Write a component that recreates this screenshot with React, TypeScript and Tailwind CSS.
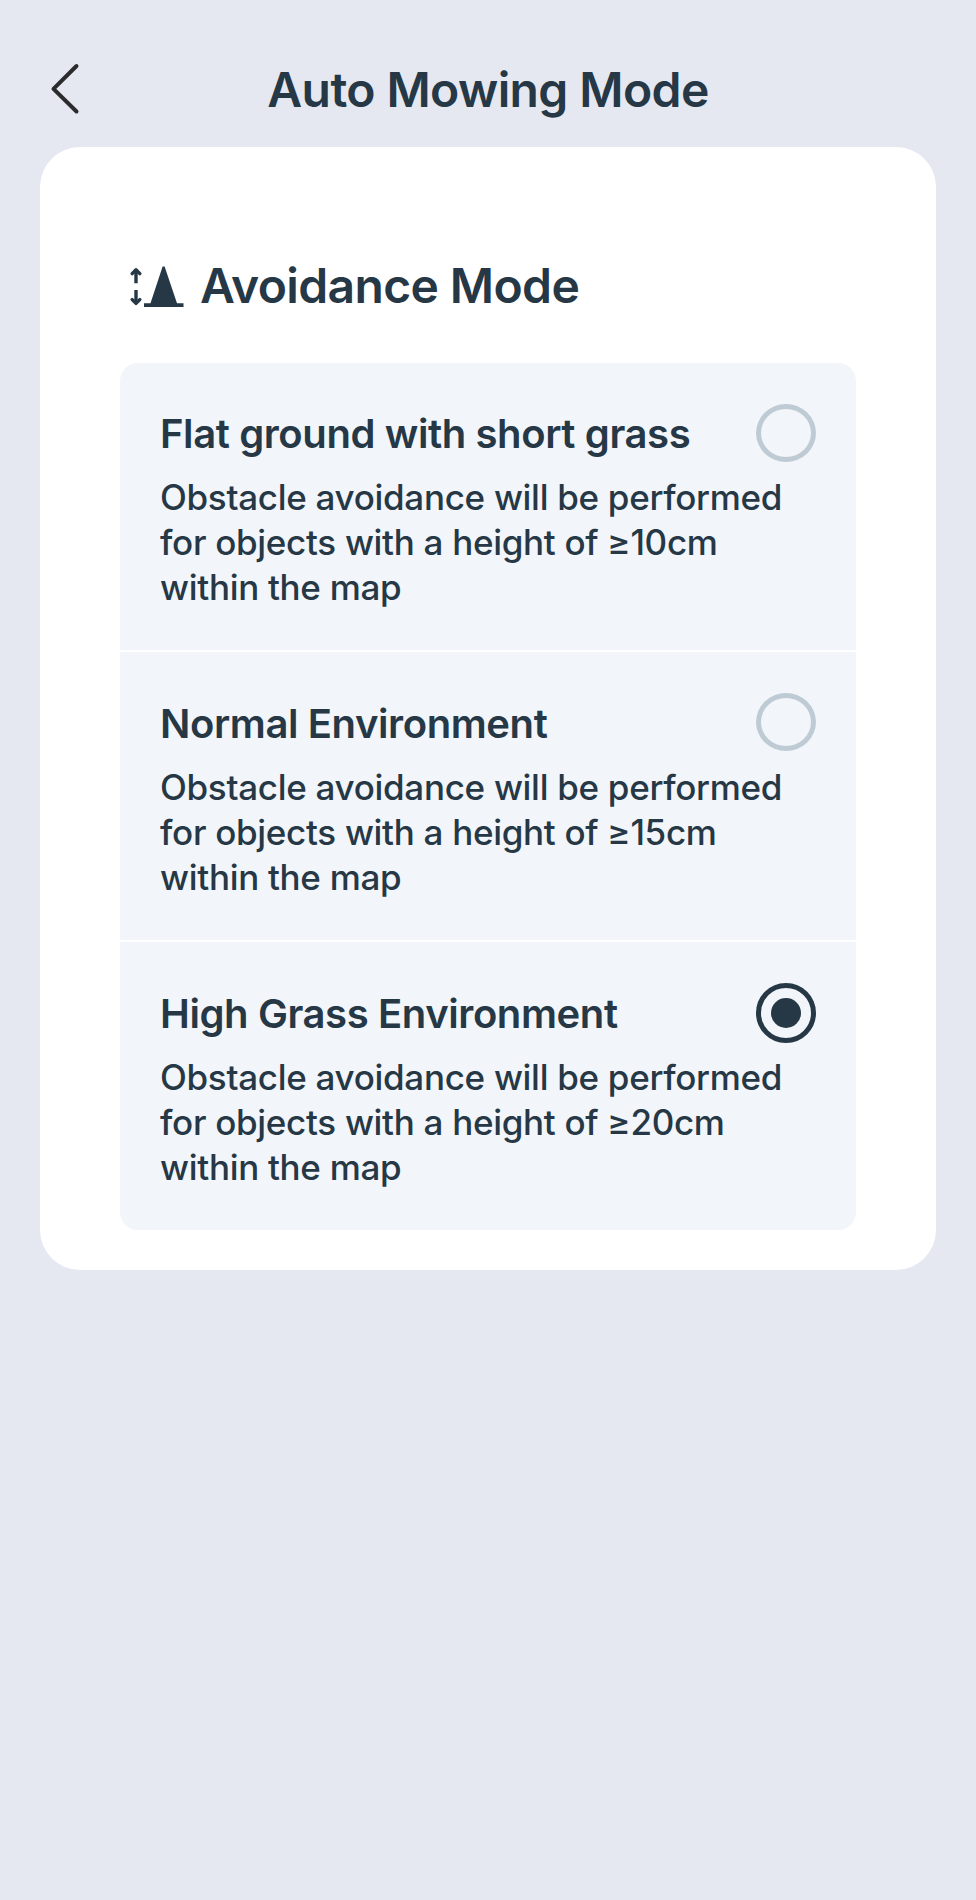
import { useState } from "react";

const modes = [
  {
    id: "flat",
    name: "Flat ground with short grass",
    lines: ["Obstacle avoidance will be performed", "for objects with a height of ≥10cm", "within the map"],
    box: "h-[287px] pt-10",
    radio: "h-[58px] mt-[0.5px]",
  },
  {
    id: "normal",
    name: "Normal Environment",
    lines: ["Obstacle avoidance will be performed", "for objects with a height of ≥15cm", "within the map"],
    box: "h-[288px] pt-[41px]",
    radio: "h-[58px]",
  },
  {
    id: "high",
    name: "High Grass Environment",
    lines: ["Obstacle avoidance will be performed", "for objects with a height of ≥20cm", "within the map"],
    box: "h-[288px] pt-[40.5px]",
    radio: "h-[60px]",
  },
];

const App = () => {
  const [selected, setSelected] = useState("high");

  return (
    <div className="min-h-[1900px] bg-[#e5e8f1] px-10 text-[#263846] font-['Inter',sans-serif] [font-feature-settings:'calt'_0]">
      {/* Header */}
      <header className="grid h-[147px] grid-cols-[80px_1fr_80px] items-start pt-[60px]">
        <button className="cursor-pointer" aria-label="Back">
          <svg width="50" height="58" viewBox="0 0 50 58" fill="none">
            <path
              d="M36.5 6 13.5 28.8 36.5 51.5"
              stroke="#2b2b2d"
              strokeWidth="4"
              strokeLinecap="round"
              strokeLinejoin="round"
            />
          </svg>
        </button>
        <h1 className="whitespace-nowrap text-center text-[48px] font-semibold leading-[60px] tracking-[-0.6px]">
          Auto Mowing Mode
        </h1>
      </header>

      <main className="h-[1123px] rounded-[40px] bg-white px-20 pt-[108px]">
        <div className="flex h-[108px] items-start pl-[10px]">
          <svg className="mt-[10px]" width="56" height="44" viewBox="0 0 56 44" fill="none">
            <g stroke="#263846" strokeWidth="3.4" strokeLinejoin="round">
              <path d="M6 18.300V5M6 25V38" />
              <path
                d="M2.200 8.600 6 4.800 9.800 8.600M2.200 34.600 6 38.400 9.800 34.600"
                strokeLinecap="round"
              />
            </g>
            <path
              d="M32.600 1.500h2L47 38.300H53.500V42H14V38.300H20.500Z"
              fill="#263846"
            />
          </svg>
          <h2 className="ml-[14px] mt-px whitespace-nowrap text-[48px] font-semibold leading-[60px] tracking-[-0.62px]">
            Avoidance Mode
          </h2>
        </div>

        {/* Mode list */}
        <div className="flex flex-col gap-[2px] overflow-hidden rounded-[18px]">
          {modes.map((item) => (
            <div
              key={item.id}
              className={`cursor-pointer bg-[#f2f5f9] px-10 ${item.box}`}
              onClick={() => setSelected(item.id)}
            >
              <div className="flex h-[72px] items-start justify-between">
                <h3 className="whitespace-nowrap text-[40px] font-semibold leading-[61px] tracking-[-0.4px]">
                  {item.name}
                </h3>
                <span
                  className={`flex w-[60px] items-center justify-center rounded-[50%] border-[5px] ${item.radio} ${
                    selected === item.id ? "border-[#263846]" : "border-[#bfcbd4]"
                  }`}
                >
                  {selected === item.id && (
                    <span className="h-[30px] w-[30px] rounded-full bg-[#263846]" />
                  )}
                </span>
              </div>
              <div className="text-[35px] font-[450] leading-[45px] tracking-[-0.3px]">
                {item.lines.map((line) => (
                  <p key={line} className="whitespace-nowrap">
                    {line}
                  </p>
                ))}
              </div>
            </div>
          ))}
        </div>
      </main>
    </div>
  );
};

export default App;
